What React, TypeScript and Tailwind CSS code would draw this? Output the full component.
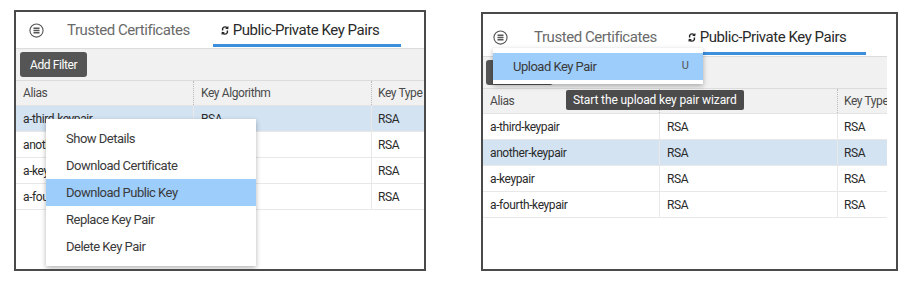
import React from 'react';

const rows = ['a-third-keypair', 'another-keypair', 'a-keypair', 'a-fourth-keypair'];

function MenuIcon() {
  return (
    <svg width="15" height="15" viewBox="0 0 16 16" fill="none" stroke="#555" strokeWidth="1.2">
      <circle cx="8" cy="8" r="7" />
      <path d="M4.8 5.6h6.4M4.8 8h6.4M4.8 10.4h6.4" strokeWidth="1.4" />
    </svg>
  );
}

function SwapIcon() {
  return (
    <svg width="8" height="13" viewBox="0 0 8 13" fill="none" stroke="#222" strokeWidth="1.4">
      <path d="M6.6 4.4A2.8 3 0 0 0 1.6 4.6v2" />
      <path d="M4.6 4.2l2.1.4.3-2.1" strokeWidth="1.2" />
      <path d="M1.4 8.6a2.8 3 0 0 0 5-.2v-2" />
      <path d="M3.4 8.8l-2.1-.4-.3 2.1" strokeWidth="1.2" />
    </svg>
  );
}

function Tabs({ barLeft, barWidth, iconShift }: { barLeft: number; barWidth: number; iconShift: number }) {
  return (
    <div className="relative flex items-center h-full text-[15px] tracking-[-0.45px]">
      <div className="w-[40px] flex justify-center shrink-0" style={{ marginLeft: iconShift }}>
        <MenuIcon />
      </div>
      <span className="text-[#6a6a6a]" style={{ marginLeft: 11 - iconShift }}>Trusted Certificates</span>
      <span className="ml-[31px] flex items-center gap-[4px] text-[#2a2a2a]">
        <SwapIcon />
        Public-Private Key Pairs
      </span>
      <div
        className="absolute bottom-[1px] h-[3px] bg-[#3d8fdc]"
        style={{ left: barLeft, width: barWidth }}
      />
    </div>
  );
}

function Table({ selected, colW }: { selected: number; colW: number[] }) {
  return (
    <div className="text-[12px] tracking-[-0.4px] text-[#2a2a2a]">
      <div className="flex h-[26px] items-center bg-[#f1f1f1] border-t border-[#dcdcdc] border-b border-b-[#e4e4e4] text-[#4a4a4a]">
        <div className="shrink-0 h-full flex items-center pl-[7px] border-r border-dotted border-[#bbb]" style={{ width: colW[0] }}>Alias</div>
        <div className="shrink-0 h-full flex items-center pl-[7px] border-r border-dotted border-[#bbb]" style={{ width: colW[1] }}>Key Algorithm</div>
        <div className="shrink-0 h-full flex items-center pl-[6px] whitespace-nowrap" style={{ width: colW[2] }}>Key Type</div>
      </div>
      {rows.map((r, i) => (
        <div
          key={r}
          className={`flex h-[26px] items-center border-b border-[#e8e8e8] ${i === selected ? 'bg-[#d3e3f2]' : 'bg-white'}`}
        >
          <div className="shrink-0 h-full flex items-center pl-[7px] border-r border-[#e8e8e8]" style={{ width: colW[0] }}>{r}</div>
          <div className="shrink-0 h-full flex items-center pl-[7px] border-r border-[#e8e8e8]" style={{ width: colW[1] }}>RSA</div>
          <div className="shrink-0 h-full flex items-center pl-[6px]" style={{ width: colW[2] }}>RSA</div>
        </div>
      ))}
    </div>
  );
}

function AddFilter() {
  return (
    <button className="h-[25px] px-[10px] bg-[#555] text-white text-[12px] tracking-[-0.4px] rounded-[3px]">Add Filter</button>
  );
}

function LeftPanel() {
  const items = ['Show Details', 'Download Certificate', 'Download Public Key', 'Replace Key Pair', 'Delete Key Pair'];
  return (
    <div className="relative w-[412px] h-[261px] border-2 border-[#4a4a4a] bg-white overflow-hidden">
      <div className="h-[36px]">
        <Tabs barLeft={197} barWidth={188} iconShift={0} />
      </div>
      <div className="h-[32px] bg-[#f1f1f1] border-t border-[#dcdcdc] flex items-center pl-[4px]">
        <AddFilter />
      </div>
      <div className="overflow-hidden">
        <Table selected={0} colW={[178, 178, 60]} />
      </div>
      <div className="absolute left-[30px] top-[107px] w-[210px] bg-white shadow-[0_2px_5px_rgba(0,0,0,0.3)] py-[6px] text-[13px] tracking-[-0.5px] text-[#3a3a3a]">
        {items.map((it, i) => (
          <div key={it} className={`h-[27px] flex items-center pl-[20px] ${i === 2 ? 'bg-[#9dcdfb]' : ''}`}>
            {it}
          </div>
        ))}
      </div>
    </div>
  );
}

function RightPanel() {
  return (
    <div className="relative w-[417px] h-[259px] border-2 border-[#4a4a4a] bg-white overflow-hidden">
      <div className="w-[404px]">
        <div className="h-[42px] pt-[4px]">
          <Tabs barLeft={200} barWidth={183} iconShift={-3} />
        </div>
        <div className="h-[32px] bg-[#f1f1f1] border-t border-[#dcdcdc] flex items-center pl-[3px]">
          <AddFilter />
        </div>
        <div className="overflow-hidden">
          <Table selected={1} colW={[177, 178, 49]} />
        </div>
      </div>
      <div className="absolute left-[10px] top-[34px] w-[210px] bg-white shadow-[0_2px_5px_rgba(0,0,0,0.3)] pt-[5px] pb-[4px] text-[13px] tracking-[-0.5px] text-[#3a3a3a]">
        <div className="h-[27px] flex items-center justify-between pl-[20px] pr-[14px] bg-[#9dcdfb]">
          <span>Upload Key Pair</span>
          <span className="text-[11px] tracking-normal text-[#555]">U</span>
        </div>
      </div>
      <div className="absolute left-[83px] top-[76px] h-[20px] px-[7px] flex items-center bg-[#4b4b4b] text-white text-[12px] tracking-[-0.12px] rounded-[2px] whitespace-nowrap">
        Start the upload key pair wizard
      </div>
    </div>
  );
}

export default function App() {
  return (
    <div className="w-[913px] h-[281px] bg-white flex items-start pl-[14px] pt-[10px] gap-[55px]" style={{ fontFamily: 'Roboto, "Liberation Sans", sans-serif' }}>
      <LeftPanel />
      <div className="mt-[2px]">
        <RightPanel />
      </div>
    </div>
  );
}
